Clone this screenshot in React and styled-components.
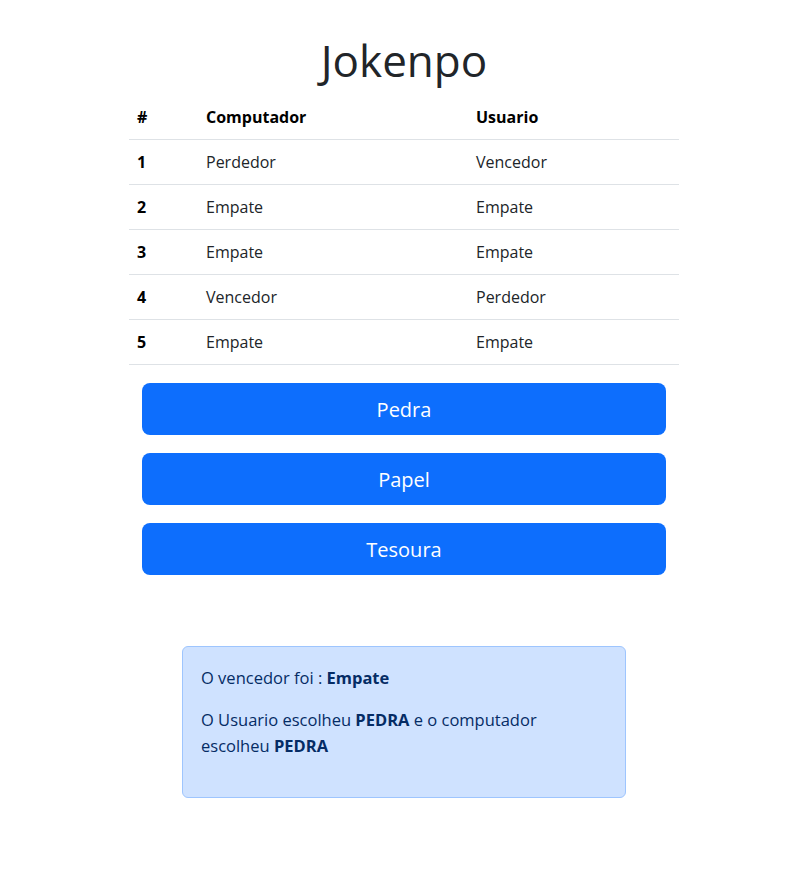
import styled, { createGlobalStyle } from 'styled-components';

const GlobalStyle = createGlobalStyle`
  * { box-sizing: border-box; }
  body {
    margin: 0;
    background: #fff;
    font-family: 'Open Sans', 'Noto Sans', sans-serif;
    color: #212529;
  }
`;

const Main = styled.main`
  display: flex;
  flex-direction: column;
  align-items: center;
  padding: 34px 0 40px 22px;
`;

const Title = styled.h1`
  margin: 0 0 9px;
  font-size: 44px;
  line-height: 52px;
  font-weight: 400;
  color: #212529;
`;

const Table = styled.table`
  width: 550px;
  border-collapse: collapse;
  font-size: 16px;
  color: #212529;
`;

const HeadCell = styled.th`
  width: ${(p) => p.$width || 'auto'};
  text-align: left;
  font-weight: 700;
  color: #000;
  padding: 10px 8px;
  line-height: 24px;
  border-bottom: 1px solid #dee2e6;
`;

const Cell = styled.td`
  padding: 10px 8px;
  line-height: 24px;
  border-bottom: 1px solid #dee2e6;
  font-weight: ${(p) => (p.$bold ? 700 : 400)};
  color: ${(p) => (p.$bold ? '#000' : '#212529')};
`;

const ButtonStack = styled.div`
  display: flex;
  flex-direction: column;
  gap: 18px;
  width: 524px;
  margin-top: 18px;
`;

const ChoiceButton = styled.button`
  height: 52px;
  border: none;
  border-radius: 8px;
  background: #0d6efd;
  color: #fff;
  font-family: inherit;
  font-size: 20px;
  cursor: pointer;

  &:hover {
    background: #0b5ed7;
  }
`;

const Alert = styled.div`
  width: 444px;
  margin-top: 71px;
  padding: 18px 18px 22px;
  background: #cfe2ff;
  border: 1px solid #9ec5fe;
  border-radius: 6px;
  color: #052c65;
  font-size: 16.5px;
  line-height: 26px;

  p {
    margin: 0 0 16px;
  }

  strong {
    font-weight: 700;
  }
`;

const rounds = [
  { id: 1, computador: 'Perdedor', usuario: 'Vencedor' },
  { id: 2, computador: 'Empate', usuario: 'Empate' },
  { id: 3, computador: 'Empate', usuario: 'Empate' },
  { id: 4, computador: 'Vencedor', usuario: 'Perdedor' },
  { id: 5, computador: 'Empate', usuario: 'Empate' },
];

const App = () => {
  return (
    <>
      <GlobalStyle />
      <Main>
        <Title>Jokenpo</Title>
        <Table>
          <thead>
            <tr>
              <HeadCell $width="69px">#</HeadCell>
              <HeadCell $width="270px">Computador</HeadCell>
              <HeadCell>Usuario</HeadCell>
            </tr>
          </thead>
          <tbody>
            {rounds.map((r) => (
              <tr key={r.id}>
                <Cell $bold>{r.id}</Cell>
                <Cell>{r.computador}</Cell>
                <Cell>{r.usuario}</Cell>
              </tr>
            ))}
          </tbody>
        </Table>

        <ButtonStack>
          <ChoiceButton>Pedra</ChoiceButton>
          <ChoiceButton>Papel</ChoiceButton>
          <ChoiceButton>Tesoura</ChoiceButton>
        </ButtonStack>

        <Alert>
          <p>
            O vencedor foi : <strong>Empate</strong>
          </p>
          <p>
            O Usuario escolheu <strong>PEDRA</strong> e o computador escolheu{' '}
            <strong>PEDRA</strong>
          </p>
        </Alert>
      </Main>
    </>
  );
};

export default App;
